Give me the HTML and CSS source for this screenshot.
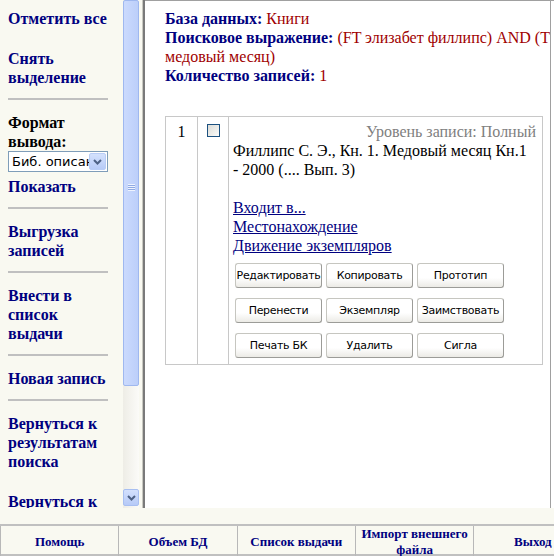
FILE: index.html
```html
<!DOCTYPE html>
<html lang="ru">
<head>
<meta charset="utf-8">
<title>Результаты поиска</title>
<link rel="stylesheet" href="styles.css">
</head>
<body>
<div class="frames">
  <div class="side-frame">
    <nav class="side">
      <a class="side-link" href="#">Отметить все</a>
      <a class="side-link spaced" href="#">Снять выделение</a>
      <div class="sep"></div>
      <div class="fmt">
        <span class="fmt-label">Формат вывода:</span>
        <div class="select"><span class="select-text">Биб. описание</span><span class="select-btn"><svg width="9" height="6" viewBox="0 0 9 6"><path d="M1 1 L4.5 4.5 L8 1" fill="none" stroke="#4d6185" stroke-width="2"/></svg></span></div>
      </div>
      <a class="side-link" href="#">Показать</a>
      <div class="sep"></div>
      <a class="side-link" href="#">Выгрузка записей</a>
      <div class="sep"></div>
      <a class="side-link" href="#">Внести в список выдачи</a>
      <div class="sep"></div>
      <a class="side-link" href="#">Новая запись</a>
      <div class="sep"></div>
      <a class="side-link" href="#">Вернуться к результатам поиска</a>
      <a class="side-link spaced" href="#">Вернуться к запросу</a>
    </nav>
    <div class="vscroll">
      <div class="thumb"><span class="grip"></span></div>
      <div class="track"></div>
      <div class="down-btn"><svg width="9" height="6" viewBox="0 0 9 6"><path d="M1 1 L4.5 4.5 L8 1" fill="none" stroke="#4d6185" stroke-width="2"/></svg></div>
    </div>
    <div class="divider"></div>
  </div>
  <main class="main">
    <div class="view">
      <div class="info">
        <div><b class="lbl">База данных:</b> <span class="val">Книги</span></div>
        <div><b class="lbl">Поисковое выражение:</b> <span class="val">(FT элизабет филлипс) AND (TI медовый месяц)</span></div>
        <div><b class="lbl">Количество записей:</b> <span class="val">1</span></div>
      </div>
      <div class="rec">
        <div class="c-num">1</div>
        <div class="c-chk"><span class="chk"></span></div>
        <div class="c-body">
          <div class="level">Уровень записи: Полный</div>
          <div class="desc">Филлипс С. Э., Кн. 1. Медовый месяц Кн.1 - 2000 (.... Вып. 3)</div>
          <div class="links">
            <a href="#">Входит в...</a>
            <a href="#">Местонахождение</a>
            <a href="#">Движение экземпляров</a>
          </div>
          <div class="btns">
            <button class="btn">Редактировать</button>
            <button class="btn">Копировать</button>
            <button class="btn">Прототип</button>
            <button class="btn">Перенести</button>
            <button class="btn">Экземпляр</button>
            <button class="btn">Заимствовать</button>
            <button class="btn">Печать БК</button>
            <button class="btn">Удалить</button>
            <button class="btn">Сигла</button>
          </div>
        </div>
      </div>
    </div>
  </main>
</div>
<div class="strip"></div>
<div class="foot">
  <a class="foot-cell" href="#">Помощь</a>
  <a class="foot-cell" href="#">Объем БД</a>
  <a class="foot-cell" href="#">Список выдачи</a>
  <a class="foot-cell" href="#">Импорт внешнего файла</a>
  <a class="foot-cell" href="#">Выход</a>
</div>
</body>
</html>
```
FILE: styles.css
```css
* { box-sizing: border-box; }
html, body { margin: 0; padding: 0; }
body {
  width: 554px;
  height: 556px;
  overflow: hidden;
  background: #f9f9f1;
  font-family: "Liberation Serif", "Times New Roman", serif;
}
.frames { display: flex; height: 508px; }

.side-frame { display: flex; width: 145px; flex: none; }
.side {
  width: 123px;
  padding: 9px 8px 0 8px;
  overflow: hidden;
  font-size: 16px;
  line-height: 19px;
  font-weight: bold;
}
.side-link { display: block; color: #000080; text-decoration: none; }
.spaced { margin-top: 21px; }
.sep { width: 100px; height: 2px; background: #c0c0c0; margin: 11px 0 13px; }
.fmt-label { display: block; color: #000; }
.select {
  width: 100px;
  height: 21px;
  margin: 0 0 5px;
  border: 1px solid #7f9db9;
  background: #fff;
  display: flex;
  align-items: center;
  overflow: hidden;
}
.select-text {
  flex: 1;
  overflow: hidden;
  white-space: nowrap;
  padding-left: 3px;
  font: 13px "DejaVu Sans", "Liberation Sans", sans-serif;
  color: #000;
}
.select-btn {
  width: 17px;
  height: 17px;
  margin-right: 1px;
  border: 1px solid #b9cdf6;
  border-radius: 2px;
  background: linear-gradient(#d4e1fd, #b7cbf7);
  display: flex;
  align-items: center;
  justify-content: center;
  flex: none;
}

.vscroll {
  width: 16px;
  flex: none;
  display: flex;
  flex-direction: column;
  background: linear-gradient(to right, #eeede6, #fbfbf8);
}
.thumb {
  height: 386px;
  border: 1px solid #9fb8ef;
  border-radius: 2px;
  background: linear-gradient(to right, #cbdafd, #bccffa);
  display: flex;
  align-items: center;
  justify-content: center;
}
.grip {
  width: 7px;
  height: 7px;
  margin-top: -12px;
  background: repeating-linear-gradient(#eef3fe 0 1px, #8faae3 1px 2px);
}
.track { flex: 1; }
.down-btn {
  height: 17px;
  margin-bottom: 2px;
  border: 1px solid #a8bff1;
  border-radius: 2px;
  background: linear-gradient(#d3e0fd, #b6caf7);
  display: flex;
  align-items: center;
  justify-content: center;
}
.divider {
  width: 6px;
  flex: none;
  border-right: 2px solid #7a7a7a;
  box-shadow: inset -1px 0 0 #c8c8c0;
}

.main {
  flex: 1;
  min-width: 0;
  background: #fff;
  border-top: 1px solid #a0a0a0;
  padding-right: 3px;
  overflow: hidden;
}
.view {
  height: 100%;
  border-right: 1px solid #a0a0a0;
  overflow: hidden;
  padding: 8px 0 0 20px;
  font-size: 16px;
  line-height: 19px;
}
.info { width: 420px; }
.lbl { color: #000080; }
.val { color: #a00000; }

.rec {
  margin-top: 31px;
  width: 378px;
  display: grid;
  grid-template-columns: 31px 31px 1fr;
  border: 1px solid #c8c8c8;
}
.c-num { padding-top: 5px; text-align: center; }
.c-chk { border-left: 1px solid #c8c8c8; padding-top: 7px; display: flex; justify-content: center; align-items: flex-start; }
.chk {
  width: 13px;
  height: 13px;
  border: 1px solid #1c5180;
  background: linear-gradient(135deg, #dcdcd7, #fbfbf9);
}
.c-body { border-left: 1px solid #c8c8c8; padding: 5px 6px 6px 4px; }
.level { text-align: right; color: #808080; }
.desc { margin: 0 8px 19px 0; }
.links a { display: block; color: #000080; text-decoration: underline; }
.btns {
  margin: 8px 0 0 2px;
  display: grid;
  grid-template-columns: repeat(3, 87px);
  column-gap: 4px;
  row-gap: 10px;
}
.btn {
  height: 25px;
  padding: 0;
  border: 1px solid #c6c6c0;
  border-right-color: #9c9c98;
  border-bottom-color: #9c9c98;
  border-radius: 3px;
  background: linear-gradient(#ffffff, #ffffff 60%, #ecebe6);
  font: 11px "DejaVu Sans", "Liberation Sans", sans-serif;
  letter-spacing: -0.3px;
  color: #000;
}

.strip { height: 16px; }
.foot {
  display: grid;
  grid-template-columns: repeat(5, 118.3px);
  height: 32px;
  border-top: 2px solid #c0c0c0;
  border-bottom: 2px solid #c0c0c0;
}
.foot-cell {
  border-left: 1px solid #b8b8b8;
  display: flex;
  align-items: center;
  justify-content: center;
  text-align: center;
  padding: 0 2px;
  font-size: 13px;
  line-height: 16px;
  font-weight: bold;
  color: #000080;
  text-decoration: none;
}
```
